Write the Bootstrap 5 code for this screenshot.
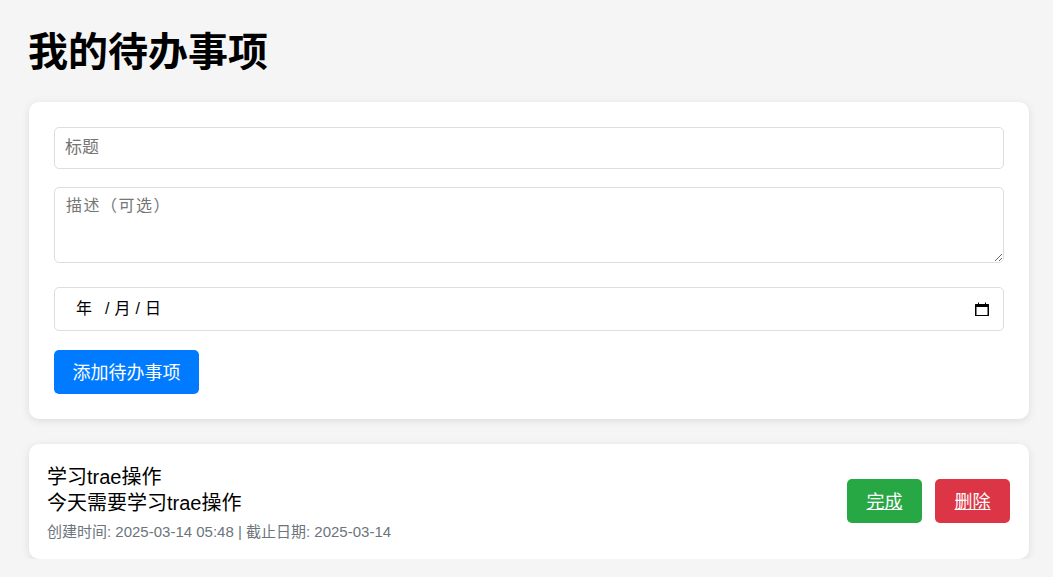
<!DOCTYPE html>
<html lang="zh-CN">
  <head>
    <meta charset="UTF-8" />
    <meta name="viewport" content="width=device-width, initial-scale=1.0" />
    <link rel="stylesheet" href="https://cdn.jsdelivr.net/npm/bootstrap@5.3.3/dist/css/bootstrap.min.css" />
    <title>我的待办事项</title>
    <style>
      body {
        background: #f5f5f5;
        color: #000;
        font-family: "Liberation Sans", "Noto Sans CJK SC", sans-serif;
        font-size: 16px;
      }
      .page-wrap {
        width: 1000px;
        margin-left: 29px;
        padding-top: 22px;
      }
      .page-title {
        font-size: 40px;
        font-weight: 700;
        line-height: 60px;
        margin: 0 0 20px -1px;
      }
      .panel {
        background: #fff;
        border-radius: 10px;
        box-shadow: 0 2px 8px rgba(0, 0, 0, 0.1);
      }
      .add-form {
        padding: 25px;
        height: 317px;
        margin-bottom: 25px;
      }
      .add-form .form-control {
        border: 1px solid #ddd;
        border-radius: 5px;
        font-size: 16px;
        color: #000;
        padding: 10px;
        box-shadow: none;
      }
      .add-form .form-control::placeholder {
        color: #757575;
      }
      .add-form .title-input {
        font-size: 17px;
        height: 42px;
        margin-bottom: 18px;
      }
      .desc-input {
        height: 76px;
        min-height: 76px;
        margin-bottom: 24px;
        display: block;
        letter-spacing: 1.5px;
        padding: 6px 11px 10px !important;
      }
      .date-input {
        height: 44px;
        margin-bottom: 19px;
        padding: 0 13px 0 21px !important;
      }
      .date-input svg {
        margin-left: auto;
      }
      .date-year {
        margin-right: 9px;
      }
      .date-sep {
        margin: 0 5px 0 4px;
      }
      .date-sep-last {
        margin-left: 5px;
        margin-right: 5px;
      }
      .act-btn {
        color: #fff;
        border: 0;
        border-radius: 5px;
        font-size: 18px;
        height: 44px;
        line-height: 46px;
        padding: 0;
        text-align: center;
      }
      .act-btn:hover {
        color: #fff;
      }
      .add-btn {
        width: 145px;
        background: #007bff;
      }
      .item-row {
        height: 115px;
        padding: 0 19px 2px 18px;
      }
      .item-text {
        padding-top: 4px;
      }
      .item-line {
        font-size: 20px;
        line-height: 26px;
      }
      .item-meta {
        color: #6c757d;
        font-size: 15px;
        line-height: 20px;
        margin-top: 6px;
      }
      .item-btns {
        gap: 13px;
      }
      .item-btn {
        width: 75px;
        text-decoration: underline;
      }
      .done-btn {
        background: #28a745;
      }
      .del-btn {
        background: #dc3545;
      }
    </style>
  </head>
  <body>
    <div class="page-wrap">
      <h1 class="page-title">我的待办事项</h1>

      <form class="panel add-form">
        <input type="text" class="form-control title-input" placeholder="标题" />
        <textarea class="form-control desc-input" placeholder="描述（可选）"></textarea>
        <div class="form-control date-input d-flex align-items-center">
          <span class="date-year">年</span><span class="date-sep">/</span><span>月</span><span class="date-sep date-sep-last">/</span><span>日</span>
          <svg width="16" height="16" viewBox="0 0 16 16" aria-hidden="true">
            <path d="M1.5 3h13a.5.5 0 0 1 .5.5v11a.5.5 0 0 1-.5.5h-13a.5.5 0 0 1-.5-.5v-11a.5.5 0 0 1 .5-.5zM2.5 6v8h11V6z" fill="#000" fill-rule="evenodd" />
            <path d="M4 1.500h1V3H4zM11 1.500h1V3h-1z" fill="#000" />
          </svg>
        </div>
        <button type="button" class="btn act-btn add-btn">添加待办事项</button>
      </form>

      <div class="panel item-row d-flex align-items-center justify-content-between">
        <div class="item-text">
          <div class="item-line">学习trae操作</div>
          <div class="item-line">今天需要学习trae操作</div>
          <div class="item-meta">创建时间: 2025-03-14 05:48 | 截止日期: 2025-03-14</div>
        </div>
        <div class="item-btns d-flex">
          <a href="#" class="btn act-btn item-btn done-btn">完成</a>
          <a href="#" class="btn act-btn item-btn del-btn">删除</a>
        </div>
      </div>
    </div>
    <script src="https://cdn.jsdelivr.net/npm/bootstrap@5.3.3/dist/js/bootstrap.bundle.min.js"></script>
  </body>
</html>
